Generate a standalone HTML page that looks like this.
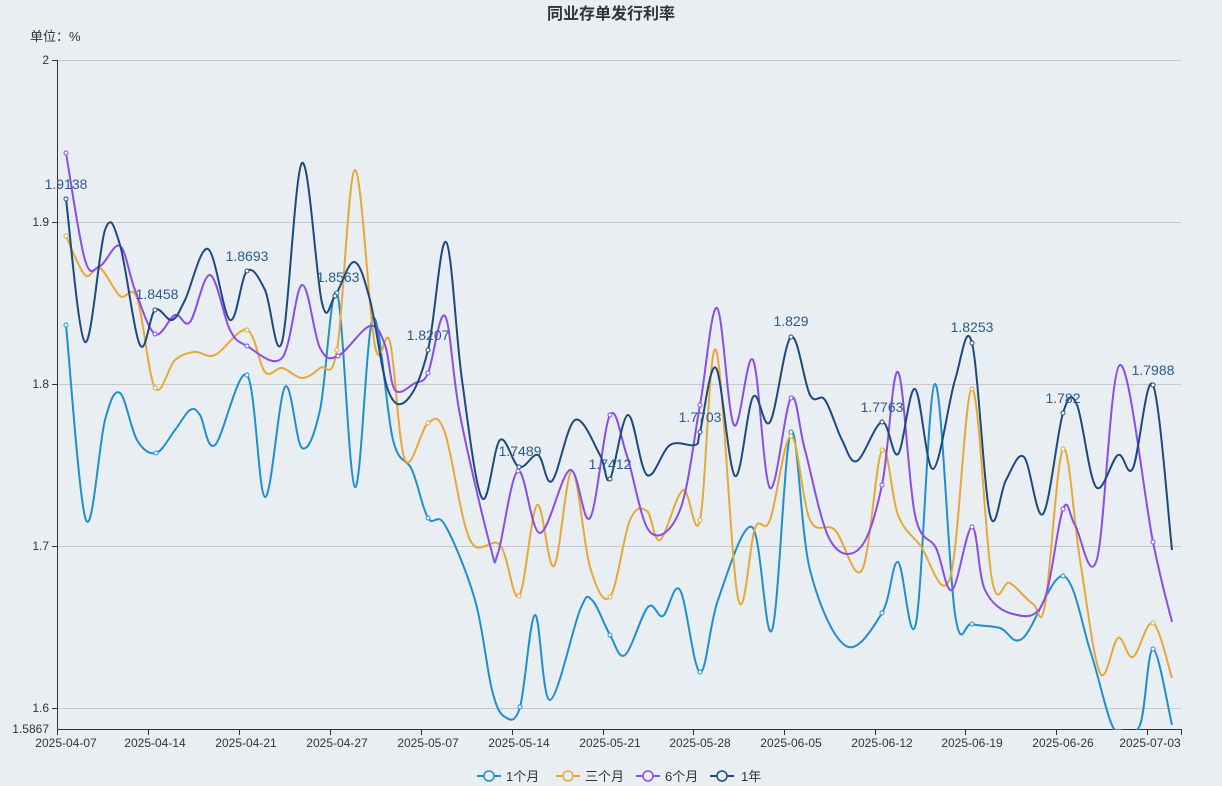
<!DOCTYPE html><html><head><meta charset="utf-8"><style>
body{margin:0;background:#e9eef3;font-family:"Liberation Sans","Noto Sans CJK SC",sans-serif;}
svg{display:block}
</style></head><body>
<svg id="s" width="1222" height="786" xmlns="http://www.w3.org/2000/svg" font-family="Liberation Sans, Noto Sans CJK SC, sans-serif">
<rect width="1222" height="786" fill="#e9eef3"/>
<text x="611" y="19" text-anchor="middle" font-size="16" font-weight="bold" fill="#333">同业存单发行利率</text>
<text x="30" y="41" font-size="13" fill="#333">单位：%</text>
<g stroke="#c8c8c8" stroke-width="1">
<line x1="57" x2="1181" y1="60.5" y2="60.5"/><line x1="57" x2="1181" y1="222.5" y2="222.5"/>
<line x1="57" x2="1181" y1="384.5" y2="384.5"/><line x1="57" x2="1181" y1="546.5" y2="546.5"/>
<line x1="57" x2="1181" y1="708.5" y2="708.5"/></g>
<g font-size="12" fill="#333" text-anchor="end">
<text x="49" y="64">2</text><text x="49" y="226">1.9</text><text x="49" y="388">1.8</text>
<text x="49" y="550">1.7</text><text x="49" y="712">1.6</text><text x="49" y="733">1.5867</text></g>
<g stroke="#333" stroke-width="1">
<line x1="57.5" x2="57.5" y1="60" y2="730"/><line x1="57" x2="1182" y1="729.5" y2="729.5"/>
<line x1="52" x2="57" y1="60.5" y2="60.5"/><line x1="52" x2="57" y1="222.5" y2="222.5"/><line x1="52" x2="57" y1="384.5" y2="384.5"/><line x1="52" x2="57" y1="546.5" y2="546.5"/><line x1="52" x2="57" y1="708.5" y2="708.5"/>
</g>
<g id="ticks" stroke="#333"></g>
<g font-size="12" fill="#333" text-anchor="middle">
<text x="66" y="747">2025-04-07</text><text x="155" y="747">2025-04-14</text><text x="246" y="747">2025-04-21</text>
<text x="337" y="747">2025-04-27</text><text x="428" y="747">2025-05-07</text><text x="519" y="747">2025-05-14</text>
<text x="610" y="747">2025-05-21</text><text x="700" y="747">2025-05-28</text><text x="791" y="747">2025-06-05</text>
<text x="882" y="747">2025-06-12</text><text x="972" y="747">2025-06-19</text><text x="1063" y="747">2025-06-26</text>
<text x="1150" y="747">2025-07-03</text></g>
<defs><clipPath id="c"><rect x="57" y="40" width="1130" height="690"/></clipPath></defs>
<g id="lines" clip-path="url(#c)" fill="none" stroke-width="2"></g>
<g id="dots"></g>
<g font-size="14" fill="#2d5a8c" text-anchor="middle">
<text x="66" y="189">1.9138</text><text x="157" y="299">1.8458</text><text x="247" y="261">1.8693</text>
<text x="338" y="282">1.8563</text><text x="428" y="340">1.8207</text><text x="520" y="456">1.7489</text>
<text x="610" y="469">1.7412</text><text x="700" y="422">1.7703</text><text x="791" y="326">1.829</text>
<text x="882" y="412">1.7763</text><text x="972" y="332">1.8253</text><text x="1063" y="403">1.782</text>
<text x="1153" y="375">1.7988</text></g>
<g font-size="13" fill="#333">
<line x1="477" x2="501" y1="776" y2="776" stroke="#1f8fce" stroke-width="2"/><circle cx="489" cy="776" r="5" fill="#e9eef3" stroke="#1f8fce" stroke-width="1.5"/><text x="506" y="781">1个月</text>
<line x1="556" x2="580" y1="776" y2="776" stroke="#e8a838" stroke-width="2"/><circle cx="568" cy="776" r="5" fill="#e9eef3" stroke="#e8a838" stroke-width="1.5"/><text x="585" y="781">三个月</text>
<line x1="636" x2="660" y1="776" y2="776" stroke="#8a4de8" stroke-width="2"/><circle cx="648" cy="776" r="5" fill="#e9eef3" stroke="#8a4de8" stroke-width="1.5"/><text x="665" y="781">6个月</text>
<line x1="710" x2="734" y1="776" y2="776" stroke="#1d4a7c" stroke-width="2"/><circle cx="722" cy="776" r="5" fill="#e9eef3" stroke="#1d4a7c" stroke-width="1.5"/><text x="741" y="781">1年</text>
</g>
</svg>
<script>
var NS="http://www.w3.org/2000/svg";
var series=[
["#1f8fce",[66,325,86,520,105,420,120,393,137,440,156,453,175,430,190,410,200,415,215,445,247,375,265,497,285,387,302,448,320,410,337,293,355,487,373,318,393,440,412,470,428,518,445,525,475,600,492,690,505,717,520,707,535,615,550,700,580,610,592,600,610,635,625,655,648,607,663,616,680,590,700,672,718,600,752,527,772,630,791,432,810,570,846,646,882,613,898,562,916,623,935,384,955,614,972,624,1000,628,1023,638,1063,576,1090,650,1110,720,1120,730,1140,725,1153,649,1172,725]],
["#e8a838",[66,236,85,275,100,268,120,296,137,298,155,388,175,360,195,352,215,355,247,330,265,372,282,368,302,378,320,368,337,350,355,170,375,346,390,342,405,460,428,423,445,433,470,540,500,545,519,596,537,505,554,566,572,471,590,567,610,597,630,520,647,511,660,540,683,490,700,520,716,350,738,598,755,528,770,520,791,436,810,520,835,530,862,570,882,450,898,515,920,545,950,578,972,389,992,580,1010,583,1033,604,1045,605,1063,449,1080,560,1100,673,1118,638,1133,657,1153,623,1172,678]],
["#8a4de8",[66,153,85,260,100,266,120,246,135,290,155,334,175,315,190,322,210,275,230,330,247,346,282,358,302,285,320,348,338,356,370,326,385,345,395,390,415,383,428,373,445,316,460,415,490,545,498,553,518,471,540,533,570,470,590,518,610,415,627,456,650,532,680,510,700,405,717,308,734,425,753,360,770,488,791,398,805,450,830,540,860,548,882,485,898,372,915,515,936,548,952,590,972,527,985,590,1013,614,1043,603,1063,509,1075,525,1097,559,1120,365,1153,542,1172,622]],
["#1d4a7c",[66,199,85,342,105,230,120,245,140,345,155,310,172,320,185,300,208,249,230,320,247,271,265,290,282,342,302,163,322,303,335,296,354,262,370,300,388,390,407,400,428,350,446,242,462,380,482,498,500,440,519,467,538,455,552,481,575,420,600,455,610,479,628,415,647,475,670,445,695,445,700,432,716,368,735,476,753,397,770,422,791,337,810,395,825,400,842,440,857,461,882,422,898,454,915,389,933,469,955,380,972,343,990,515,1006,480,1024,457,1043,514,1063,413,1077,405,1096,487,1118,455,1133,468,1153,385,1172,550]]
];
var L=document.getElementById("lines"),D=document.getElementById("dots");
var mk=[66,155,247,337,428,519,610,700,791,882,972,1063,1153];
series.forEach(function(s){
 var a=s[1],p=[];for(var i=0;i<a.length;i+=2)p.push([a[i],a[i+1]]);
 var d="M"+p[0][0]+","+p[0][1];
 for(var i=0;i<p.length-1;i++){var p0=p[Math.max(0,i-1)],p1=p[i],p2=p[i+1],p3=p[Math.min(p.length-1,i+2)];
  var t=0.17;d+=" C"+(p1[0]+(p2[0]-p0[0])*t)+","+(p1[1]+(p2[1]-p0[1])*t)+" "+(p2[0]-(p3[0]-p1[0])*t)+","+(p2[1]-(p3[1]-p1[1])*t)+" "+p2[0]+","+p2[1];}
 var e=document.createElementNS(NS,"path");e.setAttribute("d",d);e.setAttribute("stroke",s[0]);L.appendChild(e);
 mk.forEach(function(x){var best=p[0];p.forEach(function(q){if(Math.abs(q[0]-x)<Math.abs(best[0]-x))best=q;});
  if(Math.abs(best[0]-x)<4){var c=document.createElementNS(NS,"circle");c.setAttribute("cx",best[0]);c.setAttribute("cy",best[1]);c.setAttribute("r",2);c.setAttribute("fill","#fff");c.setAttribute("stroke",s[0]);D.appendChild(c);}});
});
var T=document.getElementById("ticks");
[57,148,239,330,421,512,603,693,784,875,965,1056,1147,1181].forEach(function(x){var l=document.createElementNS(NS,"line");l.setAttribute("x1",x+.5);l.setAttribute("x2",x+.5);l.setAttribute("y1",730);l.setAttribute("y2",735);T.appendChild(l);});
</script>
</body></html>
